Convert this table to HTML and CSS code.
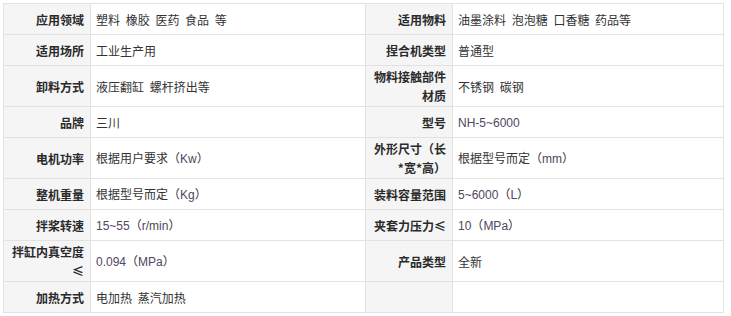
FILE: index.html
```html
<!DOCTYPE html>
<html lang="zh-CN">
<head>
<meta charset="utf-8">
<title>产品参数</title>
<link rel="stylesheet" href="styles.css">
</head>
<body>
<div class="wrap">
<table class="spec">
<colgroup>
<col class="c-label"><col class="c-val-l"><col class="c-label"><col class="c-val-r">
</colgroup>
<tbody>
<tr>
<th>应用领域</th><td>塑料 橡胶 医药 食品 等</td>
<th>适用物料</th><td>油墨涂料 泡泡糖 口香糖 药品等</td>
</tr>
<tr>
<th>适用场所</th><td>工业生产用</td>
<th>捏合机类型</th><td>普通型</td>
</tr>
<tr class="tall">
<th>卸料方式</th><td>液压翻缸 螺杆挤出等</td>
<th>物料接触部件材质</th><td>不锈钢 碳钢</td>
</tr>
<tr>
<th>品牌</th><td>三川</td>
<th>型号</th><td><span class="lat">NH-5~6000</span></td>
</tr>
<tr class="tall">
<th>电机功率</th><td>根据用户要求（<span class="lat">Kw</span>）</td>
<th>外形尺寸（长*宽*高）</th><td>根据型号而定（<span class="lat">mm</span>）</td>
</tr>
<tr>
<th>整机重量</th><td>根据型号而定（<span class="lat">Kg</span>）</td>
<th>装料容量范围</th><td><span class="lat">5~6000</span>（<span class="lat">L</span>）</td>
</tr>
<tr>
<th>拌桨转速</th><td><span class="lat">15~55</span>（<span class="lat">r/min</span>）</td>
<th>夹套力压力≤</th><td><span class="lat">10</span>（<span class="lat">MPa</span>）</td>
</tr>
<tr class="tall">
<th>拌缸内真空度≤</th><td><span class="lat">0.094</span>（<span class="lat">MPa</span>）</td>
<th>产品类型</th><td>全新</td>
</tr>
<tr>
<th>加热方式</th><td>电加热 蒸汽加热</td>
<th></th><td></td>
</tr>
</tbody>
</table>
</div>
</body>
</html>
```
FILE: styles.css
```css
html, body {
  margin: 0;
  padding: 0;
  background: #ffffff;
}
.wrap {
  padding: 3px 0 0 3px;
}
.spec {
  border-collapse: collapse;
  table-layout: fixed;
  width: 720px;
  font-family: "Noto Sans CJK SC", "Liberation Sans", sans-serif;
  font-size: 12px;
  line-height: 19px;
  color: #333333;
}
.c-label { width: 87px; }
.c-val-l { width: 275px; }
.c-val-r { width: 271px; }
.spec tr { height: 31px; }
.spec tr.tall { height: 41px; }
.spec th,
.spec td {
  border: 1px solid #e2e2e2;
  padding: 1px 5px 1px 5px;
  vertical-align: middle;
}
.spec th {
  background: #f5f5f5;
  font-weight: bold;
  text-align: right;
  color: #2a2a2a;
  padding-right: 6px;
}
.spec td {
  text-align: left;
  background: #ffffff;
  word-spacing: 3px;
}
.lat {
  font-family: "Liberation Sans", sans-serif;
  color: #524562;
  word-spacing: 0;
}
```
